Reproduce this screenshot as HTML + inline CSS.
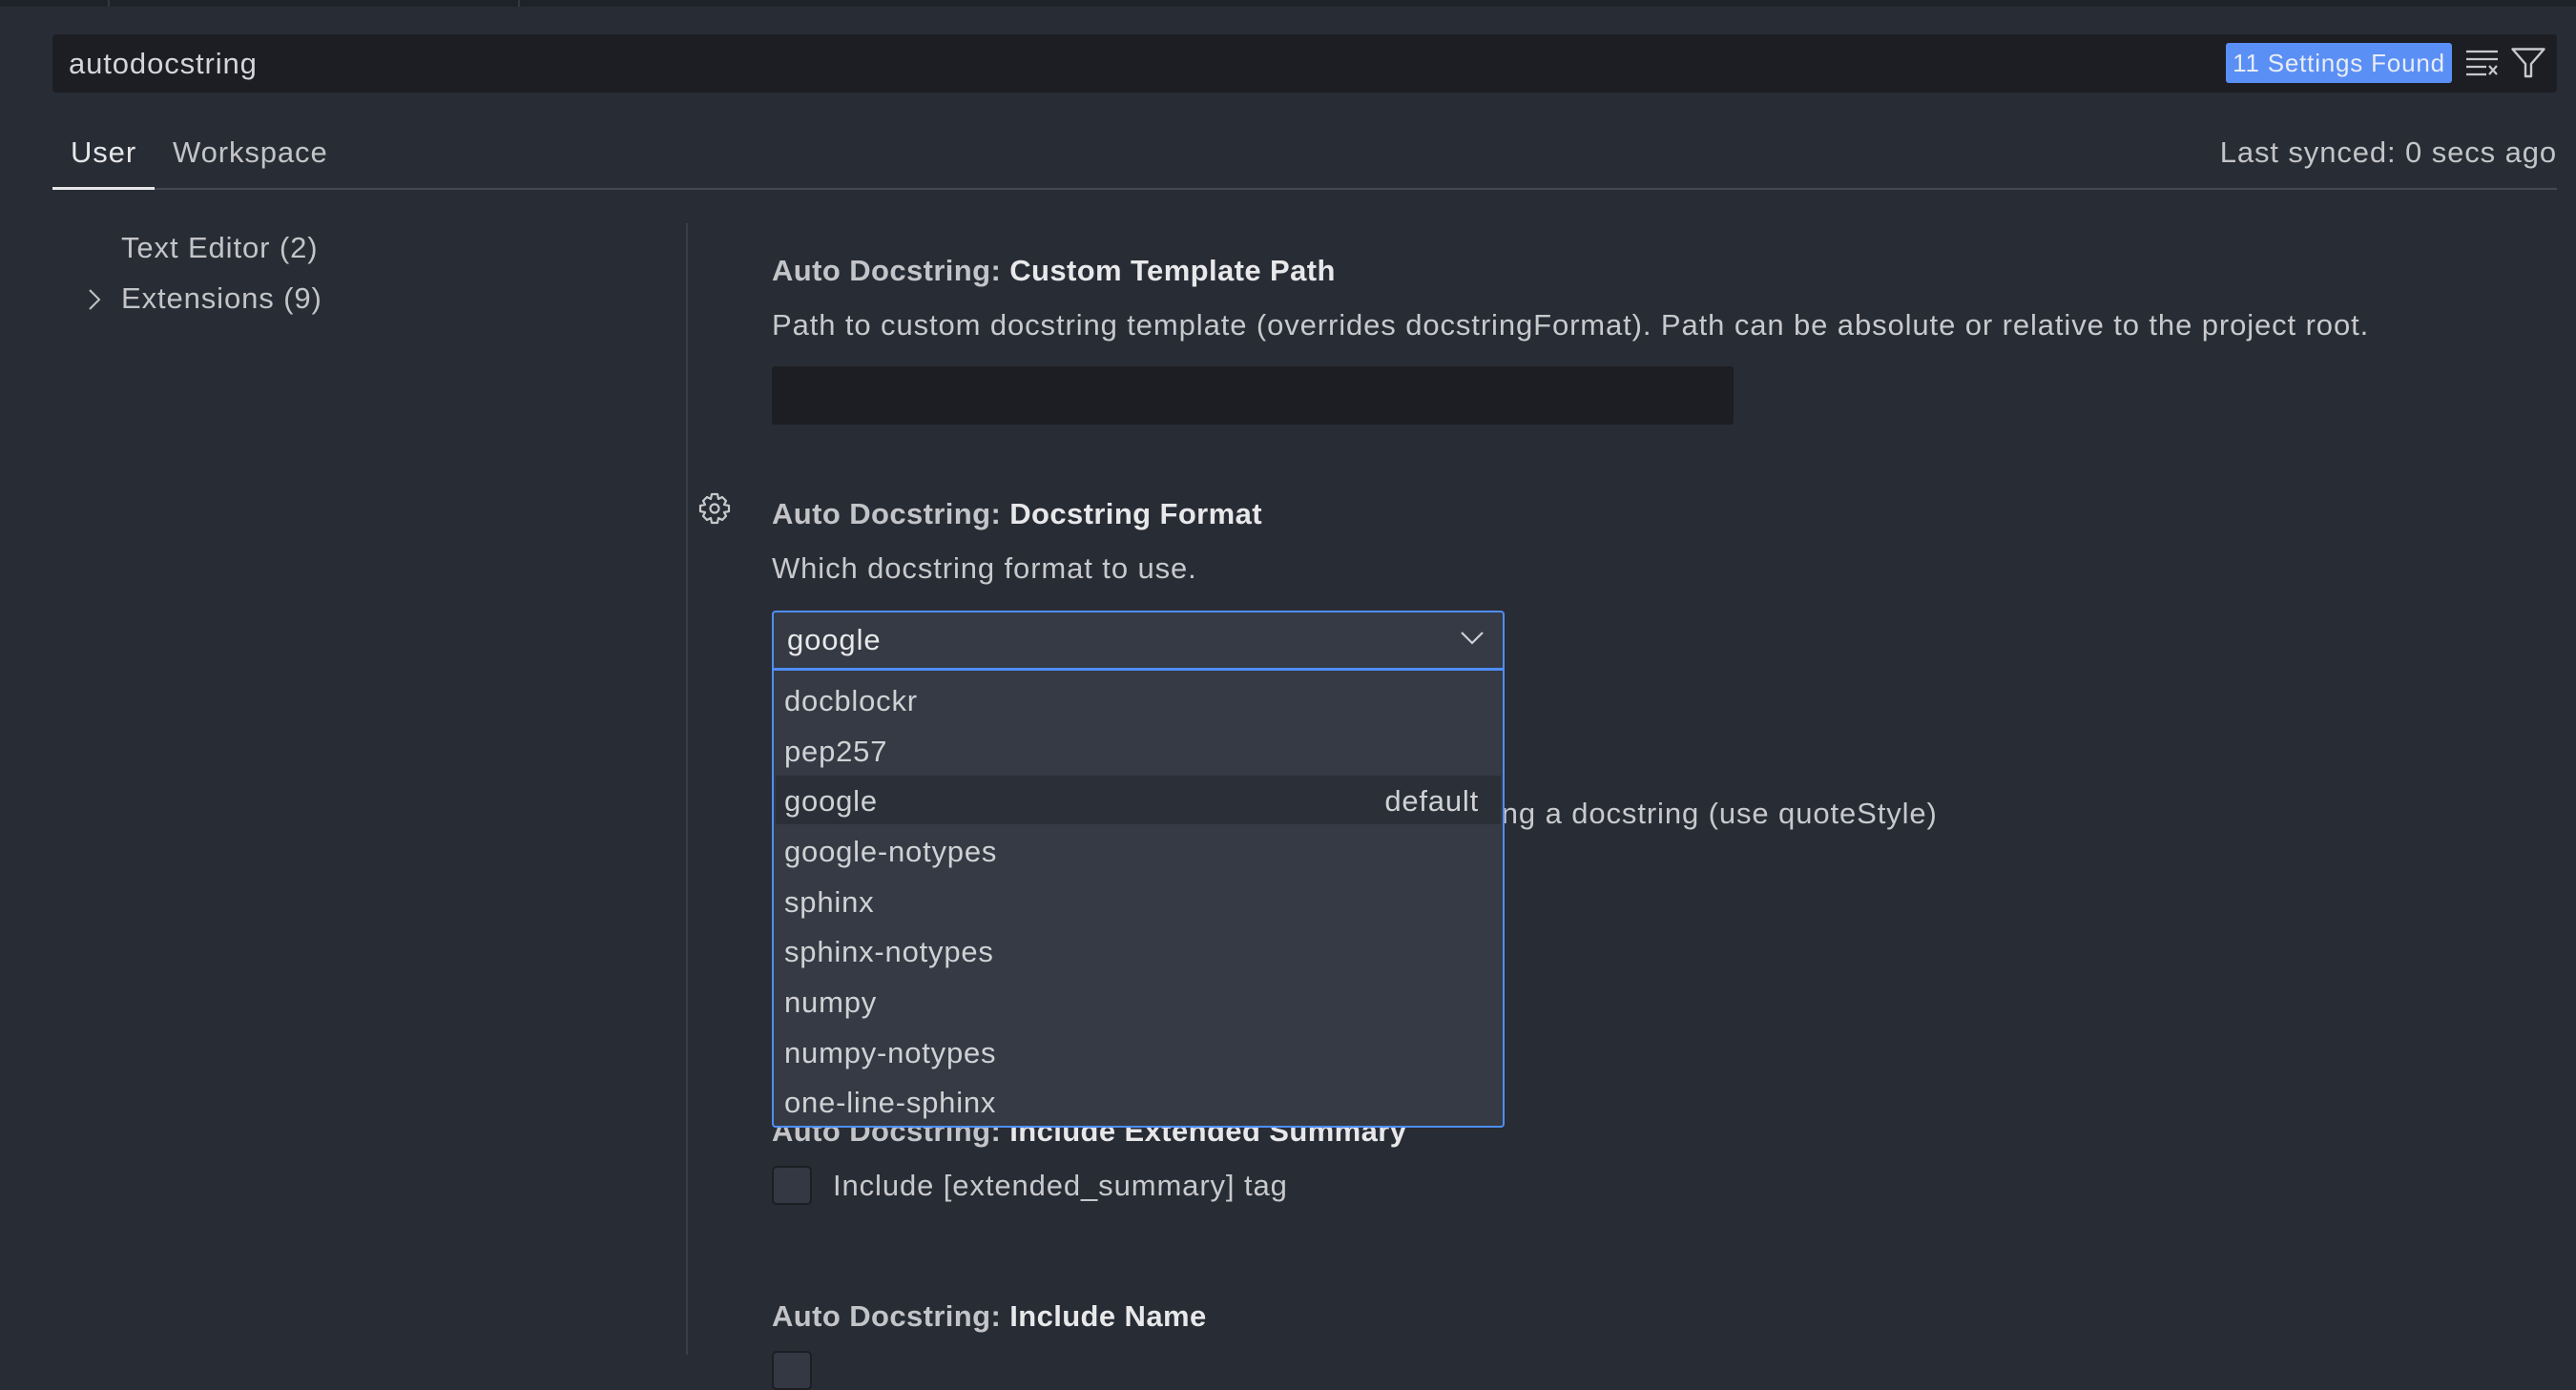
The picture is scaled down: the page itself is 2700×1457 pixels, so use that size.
<!DOCTYPE html>
<html><head><meta charset="utf-8"><style>
*{margin:0;padding:0;box-sizing:border-box}
body{width:2700px;height:1420px;overflow:hidden;background:#282c35;font-family:"Liberation Sans",sans-serif;color:#c8c9cc;position:relative}
.a{position:absolute;white-space:nowrap}
.t{font-size:31px;letter-spacing:0.9px;line-height:36px}
.h{font-size:31px;letter-spacing:0.4px;font-weight:bold;color:#c3c4c7;line-height:36px}
.h b{color:#e8e8ea}
.it{position:absolute;left:11px;font-size:31px;letter-spacing:0.8px;color:#d0d1d4;line-height:36px}
</style></head><body>
<div class="a" style="left:0;top:0;width:2700px;height:7px;background:#1f2228"></div>
<div class="a" style="left:113px;top:0;width:2px;height:7px;background:#33373e"></div>
<div class="a" style="left:543px;top:0;width:2px;height:7px;background:#33373e"></div>

<div class="a" style="left:55px;top:36px;width:2625px;height:61px;background:#1c1e23;border-radius:4px"></div>
<div class="a t" style="left:72px;top:49px;color:#d4d5d8">autodocstring</div>
<div class="a" style="left:2333px;top:45px;width:237px;height:42px;background:#5a8ff5;border-radius:3px;color:#e8ecf5;font-size:26px;letter-spacing:0.8px;line-height:42px;text-align:center">11 Settings Found</div>
<svg class="a" style="left:2584px;top:50px" width="36" height="30" viewBox="0 0 36 30"><g stroke="#c8c9cc" stroke-width="2.2" fill="none"><path d="M1 4H34M1 12H34M1 20H22M1 28H22M25 19L33 28M33 19L25 28"/></g></svg>
<svg class="a" style="left:2632px;top:50px" width="36" height="32" viewBox="0 0 36 32"><path d="M1.5 1.5H34.5L21 17V30H15V17Z" stroke="#c8c9cc" stroke-width="2.4" fill="none" stroke-linejoin="round"/></svg>

<div class="a t" style="left:74px;top:142px;color:#e6e6e8">User</div>
<div class="a t" style="left:181px;top:142px;color:#c3c4c7">Workspace</div>
<div class="a t" style="right:20px;top:142px;color:#c3c4c7">Last synced: 0 secs ago</div>
<div class="a" style="left:55px;top:197px;width:2625px;height:2px;background:#44484f"></div>
<div class="a" style="left:55px;top:196px;width:107px;height:3px;background:#e6e6e8"></div>

<div class="a t" style="left:127px;top:242px;color:#c3c4c7">Text Editor (2)</div>
<svg class="a" style="left:92px;top:302px" width="14" height="24" viewBox="0 0 14 24"><path d="M2 2L12 12L2 22" stroke="#c3c4c7" stroke-width="2" fill="none"/></svg>
<div class="a t" style="left:127px;top:295px;color:#c3c4c7">Extensions (9)</div>
<div class="a" style="left:719px;top:234px;width:2px;height:1186px;background:#3b3f46"></div>

<div class="a h" style="left:809px;top:266px">Auto Docstring: <b>Custom Template Path</b></div>
<div class="a t" style="left:809px;top:323px">Path to custom docstring template (overrides docstringFormat). Path can be absolute or relative to the project root.</div>
<div class="a" style="left:809px;top:384px;width:1008px;height:61px;background:#1c1e23;border-radius:3px"></div>

<svg class="a" style="left:731px;top:515px" width="36" height="36" viewBox="-18 -18 36 36"><path d="M-3-15H3L4-10L8-12L12-8L10-4L15-3V3L10 4L12 8L8 12L4 10L3 15H-3L-4 10L-8 12L-12 8L-10 4L-15 3V-3L-10-4L-12-8L-8-12L-4-10Z" stroke="#c8c9cc" stroke-width="2.2" fill="none" stroke-linejoin="round"/><circle r="4.5" stroke="#c8c9cc" stroke-width="2.2" fill="none"/></svg>
<div class="a h" style="left:809px;top:521px">Auto Docstring: <b>Docstring Format</b></div>
<div class="a t" style="left:809px;top:578px">Which docstring format to use.</div>

<div class="a t" style="left:1566px;top:835px">ing a docstring (use quoteStyle)</div>
<div class="a h" style="left:809px;top:1168px">Auto Docstring: <b>Include Extended Summary</b></div>
<div class="a" style="left:809px;top:1222px;width:42px;height:41px;background:#333843;border:2px solid #1c1e23;border-radius:5px"></div>
<div class="a t" style="left:873px;top:1225px">Include [extended_summary] tag</div>
<div class="a h" style="left:809px;top:1362px">Auto Docstring: <b>Include Name</b></div>
<div class="a" style="left:809px;top:1416px;width:42px;height:41px;background:#333843;border:2px solid #1c1e23;border-radius:5px"></div>

<div class="a" style="left:809px;top:640px;width:768px;height:62px;background:#353a45;border:2px solid #4f8ef7;border-radius:4px 4px 0 0"></div>
<div class="a t" style="left:825px;top:653px;color:#e8e8ea">google</div>
<svg class="a" style="left:1530px;top:661px" width="26" height="16" viewBox="0 0 26 16"><path d="M2 2L13 13L24 2" stroke="#d0d1d4" stroke-width="2.2" fill="none"/></svg>
<div class="a" style="left:809px;top:700px;width:768px;height:482px;background:#353a45;border:2px solid #4f8ef7;border-top-width:3px;border-radius:0 0 4px 4px">
<div class="a" style="left:2px;top:110px;width:760px;height:51px;background:#2b2f38"></div>
<div class="it" style="top:14px">docblockr</div>
<div class="it" style="top:67px">pep257</div>
<div class="it" style="top:119px">google</div>
<div class="it" style="top:119px;left:auto;right:25px">default</div>
<div class="it" style="top:172px">google-notypes</div>
<div class="it" style="top:225px">sphinx</div>
<div class="it" style="top:277px">sphinx-notypes</div>
<div class="it" style="top:330px">numpy</div>
<div class="it" style="top:383px">numpy-notypes</div>
<div class="it" style="top:435px">one-line-sphinx</div>
</div>
</body></html>
